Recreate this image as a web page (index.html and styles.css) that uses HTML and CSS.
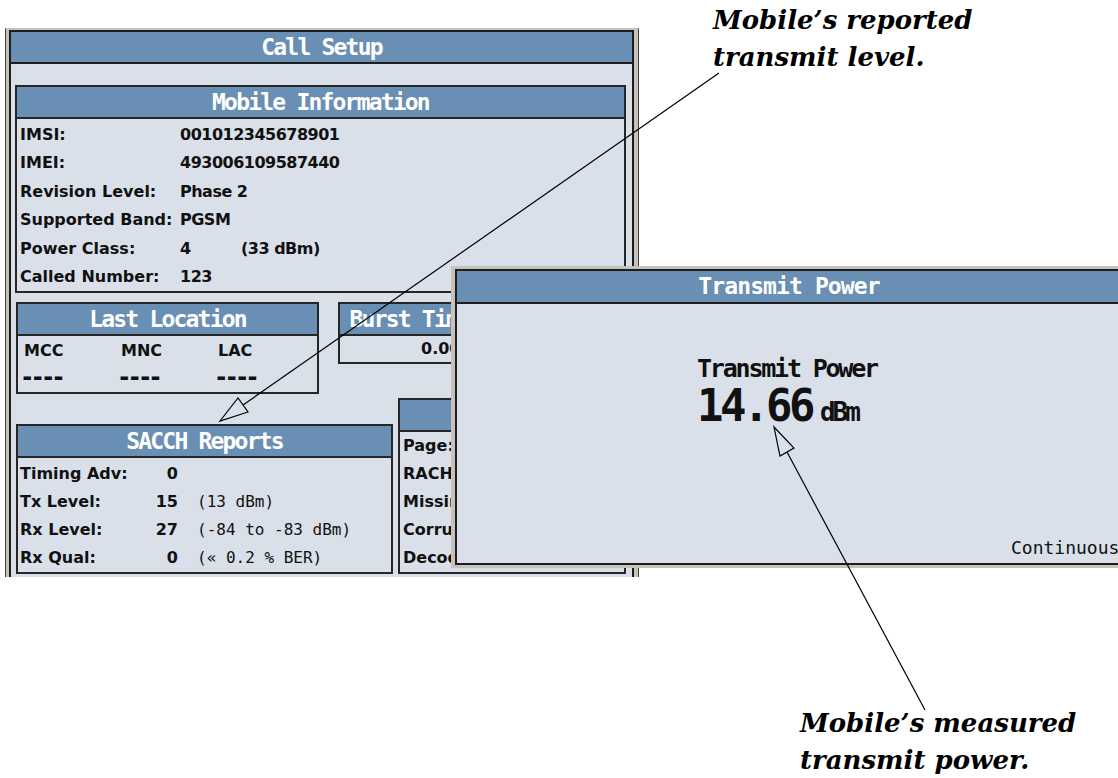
FILE: index.html
```html
<!DOCTYPE html>
<html lang="en">
<head>
    <meta charset="UTF-8">
    <meta name="viewport" content="width=device-width, initial-scale=1.0">
    <title>Call Setup - Transmit Power</title>
    <link rel="stylesheet" href="styles.css">
</head>
<body>
    <div class="stage">
        <section class="win call-setup">
            <div class="win-frame">
                <h1 class="win-title">Call Setup</h1>
                <div class="win-body">
                    <div class="box mobile-info">
                        <h2 class="box-title">Mobile Information</h2>
                        <dl class="info-list">
                            <dt>IMSI:</dt><dd>001012345678901</dd>
                            <dt>IMEI:</dt><dd>493006109587440</dd>
                            <dt>Revision Level:</dt><dd>Phase 2</dd>
                            <dt>Supported Band:</dt><dd>PGSM</dd>
                            <dt>Power Class:</dt><dd><span class="pclass">4</span>(33 dBm)</dd>
                            <dt>Called Number:</dt><dd>123</dd>
                        </dl>
                    </div>

                    <div class="box-row upper">
                        <div class="box last-location">
                            <h2 class="box-title">Last Location</h2>
                            <div class="loc-grid">
                                <span class="loc-label">MCC</span>
                                <span class="loc-label">MNC</span>
                                <span class="loc-label">LAC</span>
                                <span class="loc-dash">----</span>
                                <span class="loc-dash">----</span>
                                <span class="loc-dash">----</span>
                            </div>
                        </div>
                        <div class="box burst-timing">
                            <h2 class="box-title">Burst Timing Error</h2>
                            <div class="burst-value">0.00</div>
                        </div>
                    </div>

                    <div class="box-row lower">
                        <div class="box sacch">
                            <h2 class="box-title">SACCH Reports</h2>
                            <div class="report-list">
                                <span class="rep-label">Timing Adv:</span><span class="rep-value">0</span><span class="rep-note"></span>
                                <span class="rep-label">Tx Level:</span><span class="rep-value">15</span><span class="rep-note">(13 dBm)</span>
                                <span class="rep-label">Rx Level:</span><span class="rep-value">27</span><span class="rep-note">(-84 to -83 dBm)</span>
                                <span class="rep-label">Rx Qual:</span><span class="rep-value">0</span><span class="rep-note">(« 0.2 % BER)</span>
                            </div>
                        </div>
                        <div class="box call-stats">
                            <h2 class="box-title">Counters</h2>
                            <div class="stats-list">
                                <span>Page:</span><span>0</span>
                                <span>RACH:</span><span>0</span>
                                <span>Missing Rpts:</span><span>0</span>
                                <span>Corrupt Rpts:</span><span>0</span>
                                <span>Decode Errors:</span><span>0</span>
                            </div>
                        </div>
                    </div>
                </div>
            </div>
        </section>

        <section class="win tx-power">
            <div class="win-frame">
                <h1 class="win-title">Transmit Power</h1>
                <div class="tx-body">
                    <div class="readout-label">Transmit Power</div>
                    <div class="readout-value">14.66<span class="readout-unit">dBm</span></div>
                    <div class="tx-mode">Continuous</div>
                </div>
            </div>
        </section>

        <svg class="leaders" width="1118" height="778" viewBox="0 0 1118 778">
            <line x1="719" y1="73" x2="243" y2="405"></line>
            <polygon points="220,421 238,398 248,412"></polygon>
            <line x1="925" y1="710" x2="787" y2="452"></line>
            <polygon points="774,427 794,448 780,456"></polygon>
        </svg>

        <p class="note note-top">Mobile’s reported<br>transmit level.</p>
        <p class="note note-bottom">Mobile’s measured<br>transmit power.</p>
    </div>
</body>
</html>
```

FILE: styles.css
```css
body {
    margin: 0;
    background-color: #fff;
    overflow: hidden;
    font-family: "DejaVu Sans", sans-serif;
    color: #111;
}
.stage {
    position: relative;
    width: 1118px;
    height: 778px;
    padding: 28px 0 0 5px;
    box-sizing: border-box;
}

/* window frames */
.win {
    background-color: #c6c2ba;
    box-sizing: border-box;
}
.win-frame {
    height: 100%;
    box-sizing: border-box;
    border: 2px solid #1d1d1d;
    background-color: #d9e0ea;
    display: flex;
    flex-direction: column;
}
.win-title {
    margin: 0;
    height: 30px;
    background-color: #6a8fb4;
    border-bottom: 2px solid #1d1d1d;
    color: #fff;
    font: bold 23px/30px "DejaVu Sans Mono", monospace;
    letter-spacing: -1.8px;
    text-align: center;
    flex-shrink: 0;
}
.call-setup {
    width: 634px;
    height: 549px;
    padding: 1px 4px 0 3px;
    border: 1px solid #3c3c3c;
    border-top-color: #c6c2ba;
    border-bottom: none;
    overflow: hidden;
}
.call-setup .win-frame {
    border-bottom: none;
}
.win-body {
    padding: 21px 6px 0 4px;
}

/* boxes */
.box {
    border: 2px solid #262626;
    background-color: #d9e0ea;
    box-sizing: border-box;
}
.box-title {
    margin: 0;
    height: 30px;
    background-color: #6a8fb4;
    border-bottom: 2px solid #262626;
    color: #fff;
    font: bold 23px/30px "DejaVu Sans Mono", monospace;
    letter-spacing: -1.8px;
    text-align: center;
    white-space: nowrap;
    overflow: hidden;
}
.info-list {
    display: grid;
    grid-template-columns: 160px 1fr;
    margin: 0;
    padding: 2px 0 0 3px;
    font: bold 16px/28.4px "DejaVu Sans", sans-serif;
}
.info-list dt, .info-list dd {
    margin: 0;
    white-space: nowrap;
}
.info-list dd {
    letter-spacing: -0.5px;
}
.pclass {
    display: inline-block;
    width: 61px;
}

.box-row {
    display: flex;
    margin-left: 1px;
}
.upper {
    margin-top: 9px;
    gap: 19px;
    align-items: flex-start;
}
.lower {
    margin-top: 4px;
    gap: 5px;
    align-items: flex-end;
}
.last-location {
    width: 303px;
}
.loc-grid {
    display: grid;
    grid-template-columns: 97px 97px 97px;
    padding: 2px 0 2px 2px;
    font: bold 16px/26px "DejaVu Sans", sans-serif;
}
.loc-label {
    padding-left: 4px;
}
.loc-dash {
    font: bold 24px/26px "DejaVu Sans Mono", monospace;
    letter-spacing: -4px;
}
.burst-timing {
    width: 240px;
}
.burst-value {
    padding-left: 81px;
    font: bold 16px/26px "DejaVu Sans", sans-serif;
}

.sacch {
    width: 377px;
}
.report-list {
    display: grid;
    grid-template-columns: 120px 38px 1fr;
    padding: 2px 0 0 2px;
    font: bold 16px/28px "DejaVu Sans", sans-serif;
    white-space: nowrap;
}
.rep-value {
    text-align: right;
}
.rep-note {
    padding-left: 19px;
    font: 16px/28px "DejaVu Sans Mono", monospace;
}
.call-stats {
    width: 228px;
}
.stats-list {
    display: grid;
    grid-template-columns: 1fr auto;
    padding: 0 8px 0 3px;
    font: bold 16px/28px "DejaVu Sans", sans-serif;
    white-space: nowrap;
}

/* transmit power window, laid over the call setup screen */
.tx-power {
    position: absolute;
    left: 451px;
    top: 266px;
    width: 676px;
    height: 302px;
    padding: 3px 4px 3px 4px;
}
.tx-power .win-title {
    height: 31px;
    font-size: 23px;
    line-height: 31px;
    letter-spacing: -0.9px;
}
.tx-body {
    flex: 1;
    display: flex;
    flex-direction: column;
    padding: 52px 0 5px 240px;
    font-family: "DejaVu Sans Mono", monospace;
}
.readout-label {
    font-weight: bold;
    font-size: 25px;
    line-height: 26px;
    letter-spacing: -2.2px;
}
.readout-value {
    margin-top: 1px;
    font-weight: bold;
    font-size: 44px;
    line-height: 46px;
    letter-spacing: -3.5px;
}
.readout-unit {
    margin-left: 8px;
    font-size: 26px;
    letter-spacing: -3px;
}
.tx-mode {
    margin-top: auto;
    margin-left: 314px;
    font-size: 18px;
    line-height: 20px;
    white-space: nowrap;
}

/* callout leaders and notes */
.leaders {
    position: absolute;
    left: 0;
    top: 0;
    pointer-events: none;
}
.leaders line, .leaders polygon {
    stroke: #000;
    stroke-width: 1.2;
    fill: none;
}
.note {
    position: absolute;
    margin: 0;
    font: italic bold 26px/37px "DejaVu Serif", serif;
    color: #000;
}
.note-top {
    left: 713px;
    top: 2px;
}
.note-bottom {
    left: 800px;
    top: 705px;
}
```
